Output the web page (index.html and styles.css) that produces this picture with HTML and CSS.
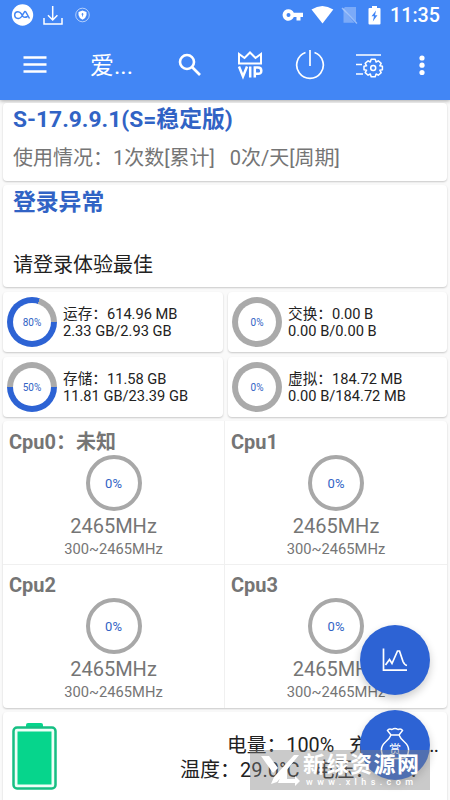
FILE: index.html
```html
<!DOCTYPE html>
<html lang="zh-CN">
<head>
<meta charset="utf-8">
<title>设备状态</title>
<link rel="stylesheet" href="styles.css">
</head>
<body>
<div class="screen">
  <header class="header">
    <div class="status">
      <svg class="status-left" width="100" height="30" viewBox="0 0 100 30" fill="none" stroke="#fff">
        <circle cx="22.5" cy="15" r="10.7" fill="#fff" stroke="none"/>
        <path d="M29.500 18.500L25.800 12Q25 11 24.200 12.300L21.500 16.600Q20 18.700 18 18.400A3.300 3.300 0 0 1 18 11.800Q20 11.800 21.500 14L23 16.500Q24.500 18 27.500 16.500" stroke="#4286f5" stroke-width="1.500"/>
        <path d="M52.700 6V20M48 15.300L52.700 20L57.400 15.300M44 18V24H62V18" stroke-width="1.500"/>
        <circle cx="82.500" cy="15" r="6.800" stroke-width=".8" opacity=".75"/>
        <path d="M82.500 10.500L86.500 12V15Q86 18 82.500 19.800Q79 18 78.500 15V12Z" fill="#fff" stroke="none"/>
        <path d="M82.500 13V16.500M81.500 14.200H83.500" stroke="#4286f5" stroke-width=".8"/>
      </svg>
      <svg class="status-right" width="102" height="30" viewBox="280 0 102 30" fill="#fff">
        <path fill-rule="evenodd" d="M288.500 9.200A5.800 5.800 0 0 1 293.800 12.800H303V17H300.500V20.500H296.500V17H293.800A5.800 5.800 0 1 1 288.500 9.200ZM288.500 13A2 2 0 1 0 288.500 17A2 2 0 0 0 288.500 13Z"/>
        <path d="M311.500 9.500Q322.300 2.500 333.300 9.500L322.500 23.500Z"/>
        <path d="M345 7H356V21.500L343 9Z" opacity=".3"/><path d="M343.500 10L354.500 22.800H343.500Z" opacity=".3"/>
        <path d="M342 8L357 23.500" stroke="#fff" stroke-opacity=".45" stroke-width="1.300"/>
        <path d="M372 6H377V8H379.500Q380.500 8 380.500 9V23.500Q380.500 24.500 379.500 24.500H369.500Q368.500 24.500 368.500 23.500V9Q368.500 8 369.500 8H372Z"/>
        <path d="M376 10.500L371.500 16.300H374L372.800 21.500L377.500 15.300H375Z" fill="#4286f5"/>
      </svg>
      <span class="clock">11:35</span>
    </div>
    <div class="toolbar">
      <svg class="menu" width="24" height="40" viewBox="0 0 24 40" stroke="#fff" stroke-width="2.300"><path d="M.5 12.500H23.500M.5 19.500H23.500M.5 26.500H23.500"/></svg>
      <h1>爱...</h1>
      <svg class="search" width="24" height="40" viewBox="0 0 24 40" fill="none" stroke="#fff" stroke-width="2.600"><circle cx="9" cy="17" r="7"/><path d="M14 22L22 30"/></svg>
      <svg class="vip" width="26" height="40" viewBox="0 0 26 40" fill="none" stroke="#fff" stroke-width="2"><path d="M2 18.500V9L7.500 13L13 7.500L18.500 13L24 9V18.500Z"/><path d="M2 21.500L6 31.500L10 21.500M13.200 21.500V32.500M17.800 32.500V22.500H21Q24.300 22.500 24.300 25.700T21 28.800H18" stroke-width="2.500"/></svg>
      <svg class="power" width="30" height="40" viewBox="0 0 30 40" fill="none" stroke="#fff" stroke-width="1.700"><path d="M10.500 7.500A13.300 13.300 0 1 0 19.500 7.500M15 5V21"/></svg>
      <svg class="tune" width="30" height="40" viewBox="0 0 30 40" fill="none" stroke="#fff" stroke-width="1.500"><path d="M1 10H26M1 19.500H7M1 29H8"/><path d="M16.200 14.200H20.200L21.100 17L23.300 15.800L26.200 18.400L24.800 20.800L27.400 21.300V24.700L24.800 25.200L26.200 27.600L23.300 30.200L21.100 29L20.200 31.800H16.200L15.300 29L13.100 30.200L10.200 27.600L11.600 25.200L9 24.700V21.300L11.600 20.800L10.200 18.400L13.100 15.800L15.300 17Z" stroke-linejoin="round"/><circle cx="18.200" cy="23" r="2.500"/></svg>
      <svg class="more" width="6" height="40" viewBox="0 0 6 40" fill="#fff"><circle cx="3" cy="13" r="2.600"/><circle cx="3" cy="20.200" r="2.600"/><circle cx="3" cy="27.500" r="2.600"/></svg>
    </div>
  </header>

  <main class="content">
    <section class="card version">
      <h2>S-17.9.9.1(S=稳定版)</h2>
      <p>使用情况：1次数[累计]&nbsp;&nbsp; 0次/天[周期]</p>
    </section>
    <section class="card login">
      <h2>登录异常</h2>
      <p>请登录体验最佳</p>
    </section>
    <section class="stats">
      <div class="card stat"><div class="ring p80"><span>80%</span></div><p>运存：614.96 MB<br>2.33 GB/2.93 GB</p></div>
      <div class="card stat"><div class="ring"><span>0%</span></div><p>交换：0.00 B<br>0.00 B/0.00 B</p></div>
      <div class="card stat"><div class="ring p50"><span>50%</span></div><p>存储：11.58 GB<br>11.81 GB/23.39 GB</p></div>
      <div class="card stat"><div class="ring"><span>0%</span></div><p>虚拟：184.72 MB<br>0.00 B/184.72 MB</p></div>
    </section>
    <section class="card cpus">
      <div class="cpu"><h3>Cpu0：未知</h3><div class="dial">0%</div><p class="freq">2465MHz</p><p class="range">300~2465MHz</p></div>
      <div class="cpu"><h3>Cpu1</h3><div class="dial">0%</div><p class="freq">2465MHz</p><p class="range">300~2465MHz</p></div>
      <div class="cpu"><h3>Cpu2</h3><div class="dial">0%</div><p class="freq">2465MHz</p><p class="range">300~2465MHz</p></div>
      <div class="cpu"><h3>Cpu3</h3><div class="dial">0%</div><p class="freq">2465MHz</p><p class="range">300~2465MHz</p></div>
    </section>
    <section class="card battery">
      <svg width="46" height="70" viewBox="0 0 46 70">
        <path d="M14 5V3Q14 1 16 1H29Q31 1 31 3V5Z" fill="#06d58c"/>
        <rect x="1.500" y="5.500" width="42" height="61" rx="3.500" fill="#effff8" stroke="#16bf83" stroke-width="2.500"/>
        <rect x="5.500" y="9.500" width="34" height="53" fill="#06d58c"/>
      </svg>
      <div class="battery-text"><p class="charge">电量：100%&nbsp;&nbsp; <span>充电状态...</span></p><p>温度：29.0°C<span class="volt">电压：4.3 V</span></p></div>
    </section>
  </main>

  <button class="fab chart" aria-label="图表"><svg width="26" height="26" viewBox="0 0 26 26" fill="none" stroke="#fff" stroke-width="1.700"><path d="M1.500 1.500V23.200H25M3.500 18L7.500 12.500L10 16.500L15.500 4H17.500L21 14.500Q22.500 18 25 18.500"/></svg></button>
  <button class="fab reward" aria-label="打赏"><svg width="30" height="34" viewBox="0 0 30 34" fill="none" stroke="#fff" stroke-width="1.500"><path d="M11 8L7.500 3.500Q9 1 12 2.500Q15 .5 18 2.500Q21 1 22.500 3.500L19 8M10 8H20M11 8Q9.500 12 5 15.500Q1 19 1.500 24Q2 31.500 9 31.500H21Q28 31.500 28.500 24Q29 19 25 15.500Q20.500 12 19 8"/></svg><span>赏</span></button>
  <div class="watermark">
    <svg width="40" height="34" viewBox="0 0 40 34" fill="#fff"><path d="M1 3H9L18 15L13 20ZM34 2H39L17 29L11 31L14 24ZM22 20L27 16V26H35V23L40 28L35 33V30H18Z"/></svg>
    <div><strong>新绿资源网</strong><small>www.xlhs.com</small></div>
  </div>
</div>
</body>
</html>
```
FILE: styles.css
```css
* { box-sizing: border-box; margin: 0; padding: 0; }

body {
  font-family: Roboto, "Noto Sans CJK SC", sans-serif;
  background: #fafafa;
  color: #222;
}

.screen { position: relative; width: 450px; height: 800px; overflow: hidden; }
svg { display: block; flex: none; }

.header { height: 100px; background: #4286f5; color: #fff; box-shadow: 0 1px 4px #0005; }
.status { height: 30px; display: flex; }
.status-right { margin-left: 180px; }
.clock { margin-left: 8px; font-size: 19.7px; font-weight: 500; line-height: 32px; }
.toolbar { height: 70px; display: flex; align-items: center; padding-left: 23px; }
.toolbar h1 { width: 44px; margin-left: 43px; font-size: 24px; font-weight: 400; line-height: 40px; padding-top: 2px; white-space: nowrap; }
.search { margin-left: 44px; }
.vip { margin-left: 35px; }
.power { margin-left: 32px; }
.tune { margin-left: 30px; }
.more { margin-left: 34px; }

.content { padding: 3px 3px 0; }
.card { background: #fff; border-radius: 4px; box-shadow: 0 1px 2px #0003; }
.card h2 { color: #3163c5; font-size: 22.8px; font-weight: 700; line-height: 32px; white-space: nowrap; }
.version { height: 78px; padding: 1px 10px; }
.version p { margin-top: 6px; color: #757575; font-size: 20px; line-height: 32px; white-space: nowrap; }
.login { height: 102px; margin-top: 4px; padding: 2px 10px; }
.login p { margin-top: 30px; font-size: 20px; line-height: 32px; }

.stats { margin-top: 5px; display: grid; grid-template-columns: 220px 219px; gap: 5px; }
.stat { height: 60px; display: flex; align-items: center; padding-left: 4px; }
.stat p { margin: 2px 0 0 6px; font-size: 14.65px; line-height: 17px; white-space: nowrap; }
.ring { width: 50px; height: 50px; border-radius: 50%; display: grid; place-items: center; background: #aaa; }
.ring span { width: 38px; height: 38px; border-radius: 50%; background: #fff; color: #3163c5; font-size: 10px; line-height: 39px; text-align: center; }
.p80 { background: conic-gradient(#2d63d4 0 18deg, #aaa 18deg 90deg, #2d63d4 90deg); }
.p50 { background: conic-gradient(#aaa 0 90deg, #2d63d4 90deg 270deg, #aaa 270deg); }

.cpus { height: 287px; margin-top: 4px; display: grid; grid-template: 143px 144px / 222px 222px; }
.cpu { display: flex; flex-direction: column; align-items: center; color: #757575; }
.cpu:nth-child(odd) { border-right: 1px solid #f0f0f0; }
.cpu:nth-child(n+3) { box-shadow: inset 0 1px #f0f0f0; }
.cpu h3 { align-self: stretch; margin-top: 9px; padding-left: 6px; font-size: 20px; line-height: 25px; }
.dial { width: 56px; height: 56px; border: 4px solid #a8a8a8; border-radius: 50%; color: #3163c5; font-size: 13px; line-height: 50px; text-align: center; }
.freq { margin-top: 2px; font-size: 20px; line-height: 26px; }
.range { font-size: 14.7px; line-height: 20px; }

.battery { height: 94px; margin-top: 4px; display: flex; padding: 10px 0 0 9px; }
.battery-text { margin-left: 122px; padding-top: 12px; font-size: 20px; line-height: 24px; white-space: nowrap; }
.charge { padding-left: 47px; font-size: 19.8px; }
.charge span { letter-spacing: -0.8px; }
.volt { margin-left: 15px; }

.fab { position: absolute; left: 360px; width: 70px; height: 70px; border: 0; border-radius: 50%; background: #2d63d4; color: #fff; display: grid; place-items: center; box-shadow: 0 4px 8px #0003; }
.chart { top: 625px; }
.reward { top: 710px; }
.fab > * { grid-area: 1 / 1; }
.reward svg { margin-bottom: 2px; }
.reward span { margin-top: 7px; font: 12px "Noto Sans CJK SC", sans-serif; }

.watermark { position: absolute; left: 250px; top: 750px; width: 180px; height: 40px; padding-left: 10px; display: flex; align-items: center; background: #8080806b; color: #fff; }
.watermark div { margin-left: 3px; text-align: center; white-space: nowrap; }
.watermark strong { display: block; font-size: 22px; letter-spacing: 1.5px; line-height: 25px; }
.watermark small { display: block; font-size: 9px; font-weight: 500; letter-spacing: 4.4px; line-height: 11px; }
```
